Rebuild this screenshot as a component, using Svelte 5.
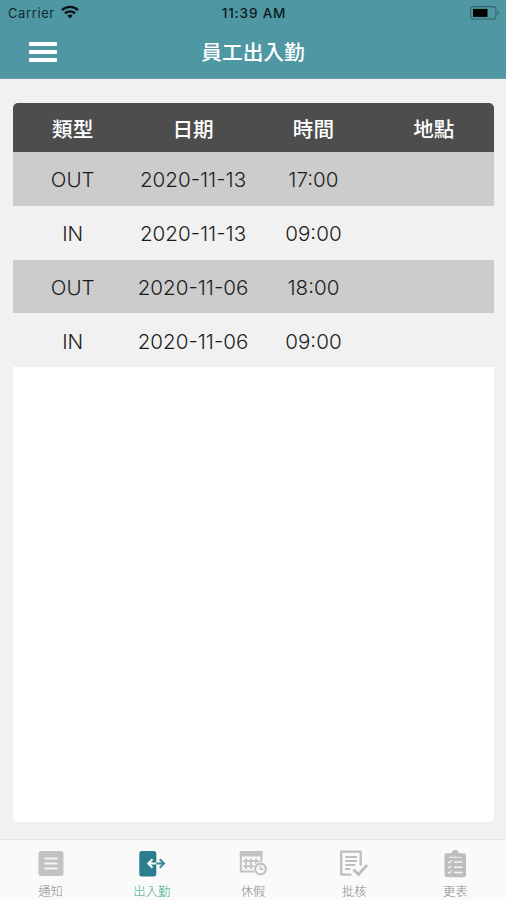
<script lang="ts">
    type Tab = { id: string; label: string };

    const columns = ['類型', '日期', '時間', '地點'];

    const records = [
        { type: 'OUT', date: '2020-11-13', time: '17:00', place: '' },
        { type: 'IN', date: '2020-11-13', time: '09:00', place: '' },
        { type: 'OUT', date: '2020-11-06', time: '18:00', place: '' },
        { type: 'IN', date: '2020-11-06', time: '09:00', place: '' }
    ];

    const tabs: Tab[] = [
        { id: 'notice', label: '通知' },
        { id: 'attendance', label: '出入勤' },
        { id: 'leave', label: '休假' },
        { id: 'approve', label: '批核' },
        { id: 'roster', label: '更表' }
    ];

    let active = $state('attendance');
</script>

<div class="screen">
    <header>
        <div class="status">
            <div class="carrier">
                <span>Carrier</span>
                <svg width="18" height="14" viewBox="0 0 18 14" fill="none" stroke="#0a1214" stroke-width="2.3">
                    <path d="M1 5.2C5.4.7 12.6.7 17 5.2" />
                    <path d="M4 8.4c2.8-2.8 7.2-2.8 10 0" />
                    <path d="M9 13.4 6.4 10.8a3.7 3.7 0 0 1 5.2 0z" fill="#0a1214" stroke="none" />
                </svg>
            </div>
            <div class="clock">11:39 AM</div>
            <div class="battery">
                <svg width="30" height="14" viewBox="0 0 30 14">
                    <rect x=".6" y=".6" width="25.3" height="12.4" rx="2.8" fill="none" stroke="#33666d" stroke-width="1.1" />
                    <rect x="3" y="2.9" width="14.5" height="8" fill="#000" />
                    <path d="M27.3 4.3c2 1.2 2 3.8 0 5z" fill="#33666d" />
                </svg>
            </div>
        </div>
        <div class="nav">
            <button class="menu" aria-label="menu">
                <i></i><i></i><i></i>
            </button>
            <h1>員工出入勤</h1>
        </div>
    </header>

    <main>
        <div class="table">
            <div class="row head">
                {#each columns as column}
                    <span>{column}</span>
                {/each}
            </div>
            {#each records as r}
                <div class="row" class:out={r.type === 'OUT'}>
                    <span>{r.type}</span>
                    <span>{r.date}</span>
                    <span>{r.time}</span>
                    <span>{r.place}</span>
                </div>
            {/each}
        </div>
    </main>

    <footer>
        {#each tabs as tab}
            <button class="tab" class:active={active === tab.id} onclick={() => (active = tab.id)}>
                <svg width="30" height="28" viewBox="0 0 30 28" fill="none">
                    {#if tab.id === 'notice'}
                        <rect x="2.5" y="1" width="25" height="25" rx="2.5" fill="#c2c2c2" />
                        <path d="M8.5 8.5h13M8.5 13.5h13M8.5 18.5h13" stroke="#f3f3f3" stroke-width="1.8" />
                    {:else if tab.id === 'attendance'}
                        <rect x="2.3" y="1" width="17" height="25.5" rx="2.5" fill="#2b7f8d" />
                        <path d="M11.5 13.5h8M15.5 9.3l-4.2 4.2 4.2 4.2" stroke="#fff" stroke-width="2" />
                        <path d="M19.3 13.5h7.5M22.8 9.3l4.2 4.2-4.2 4.2" stroke="#3a8b98" stroke-width="2" />
                    {:else if tab.id === 'leave'}
                        <path d="M2.8 2h20.6v19.5H2.8z" stroke="#c2c2c2" stroke-width="2" />
                        <path d="M1.8 1h22.6v5.5H1.8z" fill="#c2c2c2" />
                        <path d="M5 11h16.5M5 16.3h16.5M8 8.5v10.5M13 8.5v10.5M18 8.5v10.5" stroke="#c6c6c6" stroke-width="2" />
                        <circle cx="22.5" cy="19" r="7.2" fill="#fafafa" />
                        <circle cx="22.5" cy="19" r="5.4" stroke="#c2c2c2" stroke-width="2.2" />
                        <path d="M22.5 15.8v3.5h3" stroke="#c2c2c2" stroke-width="1.5" />
                    {:else if tab.id === 'approve'}
                        <path d="M12.5 24.7h-10.3v-23h19.5v14" stroke="#bdbdbd" stroke-width="2.3" stroke-linejoin="round" />
                        <path d="M6.3 7h11.5M6.3 11h11.5M6.3 15h10M6.3 19h5" stroke="#bdbdbd" stroke-width="2" />
                        <path d="M14.5 19.5l5 5 8.5-9.5" stroke="#bdbdbd" stroke-width="2.8" />
                    {:else}
                        <rect x="4.5" y="3.2" width="21.5" height="24" rx="2.3" fill="#bdbdbd" />
                        <path d="M9 7V3.2h2.8a3.3 3.3 0 0 1 6.8 0h2.6V7z" fill="#bdbdbd" />
                        <path d="M9 7.3h12.4" stroke="#f0f0f0" />
                        <path d="M14 12h8.5M14 17.2h8.5M14 22.4h8.5" stroke="#f5f5f5" stroke-width="1.5" />
                        <path d="M8 11.5l1.3 1.3 2.3-2.3M8 16.7l1.3 1.3 2.3-2.3M8 21.9l1.3 1.3 2.3-2.3" stroke="#f5f5f5" stroke-width="1.2" />
                    {/if}
                </svg>
                <span>{tab.label}</span>
            </button>
        {/each}
    </footer>
</div>

<style>
    :global(body) { background: #f1f1f1; }
    .screen {
        display: flex;
        flex-direction: column;
        width: 506px;
        height: 900px;
        overflow: hidden;
        background: #f1f1f1;
        font-family: Inter, 'Noto Sans CJK TC', sans-serif;
        color: #1c1c1c;
    }
    button { border: 0; padding: 0; background: none; font: inherit; }
    header {
        box-sizing: border-box;
        flex: none;
        height: 79px;
        background: #4f98a3;
        border-bottom: 1px solid #6a9da6;
    }
    .status {
        display: grid;
        grid-template-columns: 1fr auto 1fr;
        align-items: center;
        height: 26px;
        padding: 0 6px 0 8px;
        font-size: 13px;
        color: #102c31;
    }
    .carrier { display: flex; align-items: center; gap: 6px; letter-spacing: 0.6px; }
    .carrier svg { margin-top: -2px; }
    .clock { font-size: 13.5px; font-weight: 500; letter-spacing: 0.85px; color: #0a1b1e; }
    .battery { display: flex; justify-content: flex-end; }
    .nav {
        display: grid;
        grid-template-columns: 86px 1fr 86px;
        align-items: center;
        height: 52px;
    }
    .menu { display: flex; flex-direction: column; gap: 4px; padding-left: 29px; }
    .menu i { width: 28px; height: 3.7px; border-radius: 1px; background: #fff; }
    h1 { margin: 0; padding-top: 1px; font-size: 20.7px; font-weight: 500; line-height: 51px; text-align: center; color: #fff; }
    main { flex: 1; padding: 24px 12px 17.5px 12.5px; }
    .table {
        height: 100%;
        border-radius: 5px;
        overflow: hidden;
        background: #fff;
    }
    .row {
        box-sizing: border-box;
        display: grid;
        grid-template-columns: repeat(4, 1fr);
        align-items: center;
        height: 53.8px;
        padding-top: 2px;
        background: #f1f1f1;
        font-size: 20.6px;
        font-weight: 300;
        text-align: center;
    }
    .out { background: #ccc; }
    .head { height: 49px; padding-top: 0; background: #4d4d4d; color: #fff; font-weight: 500; }
    footer {
        box-sizing: border-box;
        flex: none;
        display: grid;
        grid-template-columns: repeat(5, 1fr);
        height: 61px;
        border-top: 1.5px solid #e2e2e2;
        background: #fafafa;
    }
    .tab {
        display: flex;
        flex-direction: column;
        align-items: center;
        padding-top: 10px;
        font-size: 12.3px;
        font-weight: 300;
        line-height: 28px;
        color: #888;
    }
    .tab svg { flex: none; }
    .active { color: #3fa888; }
</style>
